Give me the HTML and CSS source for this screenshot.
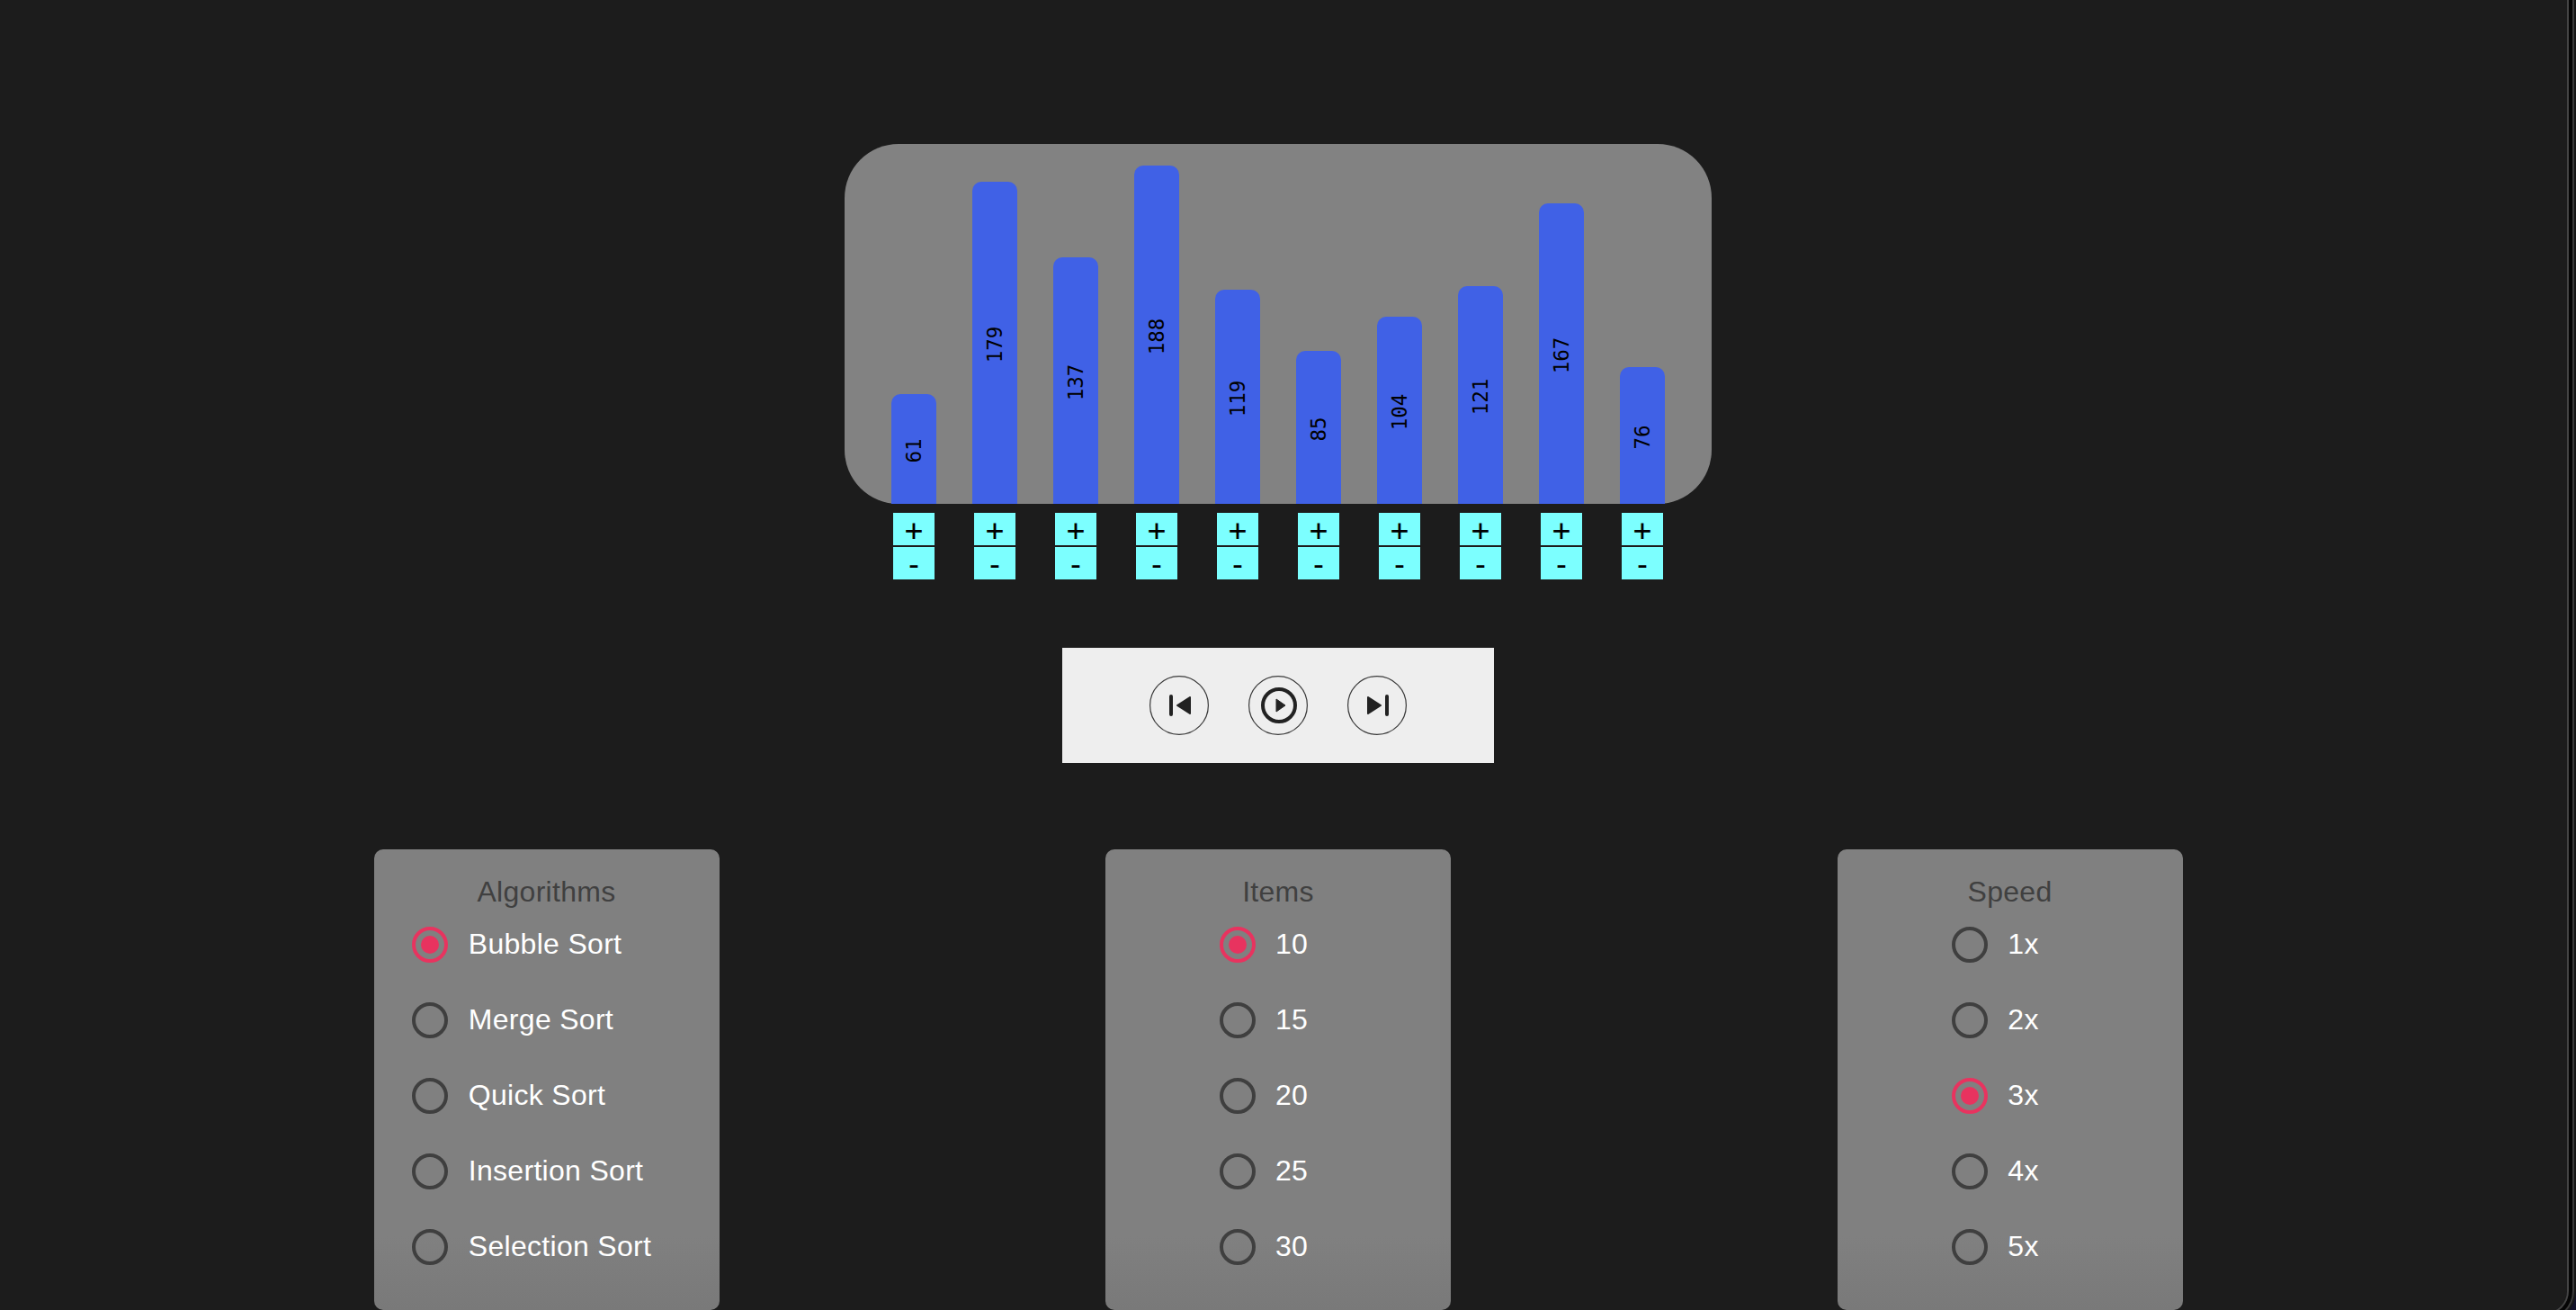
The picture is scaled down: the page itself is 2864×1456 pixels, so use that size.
FILE: index.html
```html
<!DOCTYPE html>
<html lang="en">
<head>
<meta charset="utf-8">
<title>Sorting Visualizer</title>
<link rel="stylesheet" href="styles.css">
</head>
<body>
<main class="app">
  <section class="chart">
    <div class="bar" style="height:122px"><span class="bar-label">61</span></div>
    <div class="bar" style="height:358px"><span class="bar-label">179</span></div>
    <div class="bar" style="height:274px"><span class="bar-label">137</span></div>
    <div class="bar" style="height:376px"><span class="bar-label">188</span></div>
    <div class="bar" style="height:238px"><span class="bar-label">119</span></div>
    <div class="bar" style="height:170px"><span class="bar-label">85</span></div>
    <div class="bar" style="height:208px"><span class="bar-label">104</span></div>
    <div class="bar" style="height:242px"><span class="bar-label">121</span></div>
    <div class="bar" style="height:334px"><span class="bar-label">167</span></div>
    <div class="bar" style="height:152px"><span class="bar-label">76</span></div>
  </section>
  <section class="steppers">
    <div class="stepper"><button class="step">+</button><button class="step">-</button></div>
    <div class="stepper"><button class="step">+</button><button class="step">-</button></div>
    <div class="stepper"><button class="step">+</button><button class="step">-</button></div>
    <div class="stepper"><button class="step">+</button><button class="step">-</button></div>
    <div class="stepper"><button class="step">+</button><button class="step">-</button></div>
    <div class="stepper"><button class="step">+</button><button class="step">-</button></div>
    <div class="stepper"><button class="step">+</button><button class="step">-</button></div>
    <div class="stepper"><button class="step">+</button><button class="step">-</button></div>
    <div class="stepper"><button class="step">+</button><button class="step">-</button></div>
    <div class="stepper"><button class="step">+</button><button class="step">-</button></div>
  </section>
  <section class="controls">
    <button class="control" aria-label="Previous step">
      <svg class="control-icon" viewBox="0 0 66 66">
        <circle class="control-ring" cx="33" cy="33" r="32.4"/>
        <rect class="glyph" x="22" y="21" width="4" height="24" rx="2"/>
        <path class="glyph glyph-tri" d="M45 24 31 33 45 42Z"/>
      </svg>
    </button>
    <button class="control" aria-label="Play">
      <svg class="control-icon" viewBox="0 0 66 66">
        <circle class="control-ring" cx="33" cy="33" r="32.4"/>
        <circle class="play-ring" cx="34" cy="33" r="18"/>
        <path class="glyph glyph-tri-small" d="M31 26 41 33 31 40Z"/>
      </svg>
    </button>
    <button class="control" aria-label="Next step">
      <svg class="control-icon" viewBox="0 0 66 66">
        <circle class="control-ring" cx="33" cy="33" r="32.4"/>
        <path class="glyph glyph-tri" d="M23 24 37 33 23 42Z"/>
        <rect class="glyph" x="42" y="21" width="4" height="24" rx="2"/>
      </svg>
    </button>
  </section>
  <section class="panels">
    <fieldset class="panel">
      <h2 class="panel-title">Algorithms</h2>
      <div class="options options-wide">
        <label class="option"><span class="radio radio-on"></span>Bubble Sort</label>
        <label class="option"><span class="radio"></span>Merge Sort</label>
        <label class="option"><span class="radio"></span>Quick Sort</label>
        <label class="option"><span class="radio"></span>Insertion Sort</label>
        <label class="option"><span class="radio"></span>Selection Sort</label>
      </div>
    </fieldset>
    <fieldset class="panel">
      <h2 class="panel-title">Items</h2>
      <div class="options">
        <label class="option"><span class="radio radio-on"></span>10</label>
        <label class="option"><span class="radio"></span>15</label>
        <label class="option"><span class="radio"></span>20</label>
        <label class="option"><span class="radio"></span>25</label>
        <label class="option"><span class="radio"></span>30</label>
      </div>
    </fieldset>
    <fieldset class="panel">
      <h2 class="panel-title">Speed</h2>
      <div class="options">
        <label class="option"><span class="radio"></span>1x</label>
        <label class="option"><span class="radio"></span>2x</label>
        <label class="option"><span class="radio radio-on"></span>3x</label>
        <label class="option"><span class="radio"></span>4x</label>
        <label class="option"><span class="radio"></span>5x</label>
      </div>
    </fieldset>
  </section>
</main>
<div class="window-edge"></div>
</body>
</html>
```
FILE: styles.css
```css
* {
  box-sizing: border-box;
}

html,
body {
  height: 100%;
  margin: 0;
  overflow: hidden;
  background: #1c1c1c;
}

.app {
  width: 2842px;
  height: 1456px;
  padding-top: 160px;
  display: flex;
  flex-direction: column;
  align-items: center;
}

.chart {
  width: 964px;
  height: 400px;
  padding: 0 52px;
  display: flex;
  align-items: flex-end;
  gap: 40px;
  background: #828282;
  border-radius: 60px;
}

.bar {
  width: 50px;
  display: flex;
  align-items: center;
  justify-content: center;
  background: #4061e6;
  border-radius: 10px 10px 0 0;
}

.bar-label {
  font: 22.5px "DejaVu Sans Mono", monospace;
  color: #000;
  transform: translateY(2px) rotate(-90deg);
  white-space: nowrap;
}

.steppers {
  width: 964px;
  margin-top: 10px;
  padding: 0 54px;
  display: flex;
  gap: 44px;
}

.stepper {
  width: 46px;
  display: flex;
  flex-direction: column;
  gap: 2px;
}

.step {
  width: 46px;
  height: 36px;
  padding: 3px 0 0;
  border: 0;
  background: #7cffff;
  color: #000;
  font: 34px/33px "DejaVu Sans Mono", monospace;
}

.controls {
  width: 480px;
  height: 128px;
  margin-top: 76px;
  display: flex;
  align-items: center;
  justify-content: center;
  gap: 44px;
  background: #eee;
}

.control {
  width: 66px;
  height: 66px;
  padding: 0;
  border: 0;
  background: none;
}

.control-icon {
  display: block;
  width: 66px;
  height: 66px;
}

.control-ring {
  fill: none;
  stroke: #3a3a3a;
  stroke-width: 1.2;
}

.glyph {
  fill: #222;
}

.glyph-tri {
  stroke: #222;
  stroke-width: 2;
  stroke-linejoin: round;
}

.glyph-tri-small {
  stroke: #222;
  stroke-width: 1;
  stroke-linejoin: round;
}

.play-ring {
  fill: none;
  stroke: #222;
  stroke-width: 4;
}

.panels {
  width: 2440px;
  margin-top: 96px;
  display: flex;
  justify-content: center;
  gap: 429.5px;
}

.panel {
  width: 384px;
  margin: 0;
  padding: 27px 0 30px;
  border: 0;
  border-radius: 10px;
  background: linear-gradient(#808080 84%, #797979 100%);
  font-family: "Liberation Sans", Arial, sans-serif;
  letter-spacing: 0.3px;
}

.panel-title {
  margin: 0;
  height: 39px;
  font-size: 32px;
  font-weight: 400;
  line-height: 40px;
  text-align: center;
  color: #404040;
}

.options {
  width: fit-content;
  margin: 0 auto;
  padding-right: 32px;
  display: flex;
  flex-direction: column;
  gap: 4px;
}

.options-wide {
  padding-right: 33px;
}

.option {
  height: 80px;
  padding-bottom: 2px;
  display: flex;
  align-items: center;
  gap: 22px;
  font-size: 32px;
  color: #fff;
}

.options-wide .option {
  gap: 23px;
}

.radio {
  flex: none;
  width: 40px;
  height: 40px;
  margin-bottom: -2px;
  display: flex;
  align-items: center;
  justify-content: center;
  border: 4px solid #3f3f3f;
  border-radius: 50%;
}

.radio-on {
  border-color: #e8335f;
}

.radio-on::after {
  content: "";
  width: 20px;
  height: 20px;
  border-radius: 50%;
  background: #e8335f;
}

.window-edge {
  position: absolute;
  top: -40px;
  left: -40px;
  right: 10px;
  bottom: -3px;
  border-radius: 24px;
  pointer-events: none;
  box-shadow:
    0 0 0 2px #444,
    0 0 0 6px #050505,
    0 0 0 8px #3a3a3a,
    0 0 0 10px #161616,
    0 0 0 40px #12122a;
}
```
